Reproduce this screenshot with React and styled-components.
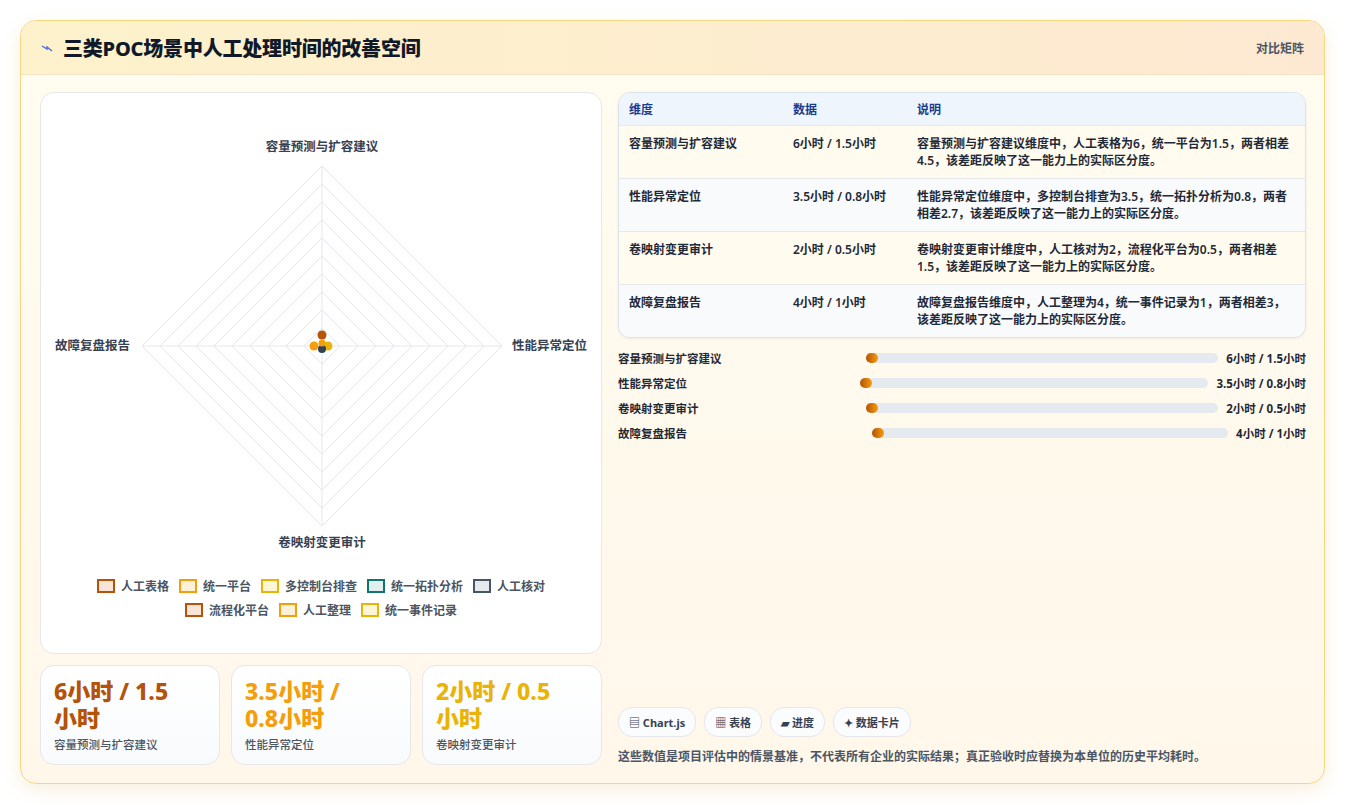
import React from "react";
import styled, { createGlobalStyle } from "styled-components";

const Global = createGlobalStyle`
  html,body{margin:0;padding:0;background:#fff;}
  body{font-family:"Noto Sans","Noto Sans CJK SC",sans-serif;color:#1f2937;}
`;
const Page = styled.div`padding:20px 20px 20px 20px;`;
const Card = styled.div`
  border:1px solid #f5d77e;border-radius:16px;overflow:hidden;
  background:linear-gradient(180deg,#fffcf0,#fff7ea);
  box-shadow:0 6px 18px rgba(217,170,80,.18);height:764px;box-sizing:border-box;display:flex;flex-direction:column;
`;
const Header = styled.div`
  height:54px;display:flex;align-items:center;justify-content:space-between;padding:0 20px 0 20px;
  background:linear-gradient(90deg,#fdf2cc,#fde9d2);border-bottom:1px solid #f1e3c4;
`;
const Title = styled.div`display:flex;align-items:center;gap:10px;font-size:20px;font-weight:800;color:#111827;letter-spacing:-.2px;`;
const Tag = styled.div`font-size:12px;color:#4b5563;font-weight:600;`;
const Body = styled.div`flex:1;display:grid;grid-template-columns:562px 688px;gap:16px;padding:17px 19px 18px 19px;`;
const Col = styled.div`display:flex;flex-direction:column;gap:11px;`;
const ChartBox = styled.div`background:#fff;border:1px solid #e5e7eb;border-radius:14px;height:562px;box-sizing:border-box;display:flex;flex-direction:column;align-items:center;padding-top:8px;`;
const Legend = styled.div`display:flex;flex-wrap:wrap;justify-content:center;gap:6px 10px;width:480px;font-size:12px;font-weight:600;color:#4b5563;margin-top:16px;`;
const LItem = styled.span`display:flex;align-items:center;gap:6px;`;
const Sw = styled.span`width:14px;height:10px;border:2px solid ${p=>p.c};background:${p=>p.bg};`;
const Kpis = styled.div`display:grid;grid-template-columns:repeat(3,1fr);gap:11px;`;
const Kpi = styled.div`background:linear-gradient(180deg,#fff,#f8fafc);border:1px solid #e5e7eb;border-radius:14px;height:100px;box-sizing:border-box;padding:12px 13px;`;
const KVal = styled.div`font-size:23px;font-weight:800;line-height:27px;color:${p=>p.c};`;
const KLab = styled.div`font-size:11.5px;font-weight:500;color:#4b5563;margin-top:4px;`;
const Table = styled.div`border:1px solid #dbe3ec;border-radius:12px;overflow:hidden;background:#fff;box-shadow:0 1px 3px rgba(0,0,0,.06);`;
const Row = styled.div`display:grid;grid-template-columns:164px 124px 1fr;padding:0 10px;border-top:${p=>p.h?"none":"1px solid #e5e7eb"};
  background:${p=>p.h?"#eef5fd":p.alt?"#f8fafc":"#fffbee"};
  font-size:12px;line-height:17px;color:${p=>p.h?"#1e3a8a":"#1f2937"};font-weight:600;
  padding-top:${p=>p.h?"8px":"9px"};padding-bottom:${p=>p.h?"7px":"9px"};min-height:${p=>p.h?"32px":"53px"};box-sizing:border-box;`;
const Bars = styled.div`display:flex;flex-direction:column;gap:7px;margin-top:1px;`;
const BarRow = styled.div`display:flex;align-items:center;font-size:11.5px;font-weight:600;height:18px;`;
const BLab = styled.div`width:${p=>p.w}px;flex-shrink:0;`;
const Track = styled.div`flex:1;height:10px;border-radius:5px;background:#e5e9f0;position:relative;`;
const Fill = styled.div`position:absolute;left:0;top:0;height:10px;width:12px;border-radius:6px;background:linear-gradient(90deg,#b45309,#f59e0b);`;
const BVal = styled.div`font-weight:700;margin-left:8px;white-space:nowrap;`;
const Spacer = styled.div`flex:1;`;
const Chips = styled.div`display:flex;gap:8px;`;
const Chip = styled.div`height:28px;padding:0 10px;border:1px solid #e5e7eb;border-radius:14px;background:#fbfcfe;display:flex;align-items:center;gap:4px;font-size:11px;font-weight:700;color:#374151;`;
const Note = styled.div`font-size:12px;font-weight:600;color:#4b5563;margin-top:10px;`;

const rows=[
["容量预测与扩容建议","6小时 / 1.5小时","容量预测与扩容建议维度中，人工表格为6，统一平台为1.5，两者相差4.5，该差距反映了这一能力上的实际区分度。"],
["性能异常定位","3.5小时 / 0.8小时","性能异常定位维度中，多控制台排查为3.5，统一拓扑分析为0.8，两者相差2.7，该差距反映了这一能力上的实际区分度。"],
["卷映射变更审计","2小时 / 0.5小时","卷映射变更审计维度中，人工核对为2，流程化平台为0.5，两者相差1.5，该差距反映了这一能力上的实际区分度。"],
["故障复盘报告","4小时 / 1小时","故障复盘报告维度中，人工整理为4，统一事件记录为1，两者相差3，该差距反映了这一能力上的实际区分度。"]];
const bars=[[248,"6小时 / 1.5小时"],[242,"3.5小时 / 0.8小时"],[248,"2小时 / 0.5小时"],[254,"4小时 / 1小时"]];
const legend=[["人工表格","#b45309","#f8e5d8"],["统一平台","#f59e0b","#fdf0d8"],["多控制台排查","#eab308","#fdf5d5"],["统一拓扑分析","#0f766e","#e0efee"],["人工核对","#475569","#e5e9ee"],["流程化平台","#b45309","#f8e5d8"],["人工整理","#f59e0b","#fdf0d8"],["统一事件记录","#eab308","#fdf5d5"]];

function Radar(){
  const cx=281,cy=245,R=180;
  const rings=[];
  for(let i=1;i<=10;i++){const r=R*i/10;rings.push(<polygon key={i} points={`${cx},${cy-r} ${cx+r},${cy} ${cx},${cy+r} ${cx-r},${cy}`} fill="none" stroke="#e5e7eb" strokeWidth="1"/>);}
  return(
    <svg width="560" height="460" viewBox="0 0 560 460" style={{display:"block"}}>
      {rings}
      <line x1={cx} y1={cy-R} x2={cx} y2={cy+R} stroke="#e5e7eb"/>
      <line x1={cx-R} y1={cy} x2={cx+R} y2={cy} stroke="#e5e7eb"/>
      <g fontSize="12.5" fill="#374151" fontWeight="600" fontFamily="Noto Sans CJK SC,sans-serif">
        <text x={cx} y={cy-195} textAnchor="middle">容量预测与扩容建议</text>
        <text x={cx} y={cy+201} textAnchor="middle">卷映射变更审计</text>
        <text x={cx-192} y={cy+4} textAnchor="end">故障复盘报告</text>
        <text x={cx+190} y={cy+4} textAnchor="start">性能异常定位</text>
      </g>
      <circle cx={cx} cy={cy-11} r="4.5" fill="#b45309"/>
      <circle cx={cx-8} cy={cy} r="4.5" fill="#f59e0b"/>
      <circle cx={cx+6} cy={cy} r="4.5" fill="#eab308"/>
      <circle cx={cx} cy={cy+3} r="4" fill="#334155"/>
      <circle cx={cx} cy={cy-3} r="3.5" fill="#f59e0b"/>
    </svg>
  );
}

export default function App(){
  return(<><Global/><Page><Card>
    <Header>
      <Title><svg width="12" height="10" viewBox="0 0 12 10"><path d="M1 3 L6 6 L6 4 L11 8" stroke="#4f6bd8" strokeWidth="1.4" fill="none"/></svg>三类POC场景中人工处理时间的改善空间</Title>
      <Tag>对比矩阵</Tag>
    </Header>
    <Body>
      <Col>
        <ChartBox>
          <Radar/>
          <Legend>{legend.map(l=><LItem key={l[0]}><Sw c={l[1]} bg={l[2]}/>{l[0]}</LItem>)}</Legend>
        </ChartBox>
        <Kpis>
          <Kpi><KVal c="#b45309">6小时 / 1.5<br/>小时</KVal><KLab>容量预测与扩容建议</KLab></Kpi>
          <Kpi><KVal c="#f59e0b">3.5小时 /<br/>0.8小时</KVal><KLab>性能异常定位</KLab></Kpi>
          <Kpi><KVal c="#eab308">2小时 / 0.5<br/>小时</KVal><KLab>卷映射变更审计</KLab></Kpi>
        </Kpis>
      </Col>
      <Col style={{gap:0}}>
        <Table>
          <Row h><div>维度</div><div>数据</div><div>说明</div></Row>
          {rows.map((r,i)=><Row key={i} alt={i%2===1}><div>{r[0]}</div><div>{r[1]}</div><div>{r[2]}</div></Row>)}
        </Table>
        <div style={{height:10}}/>
        <Bars>{rows.map((r,i)=><BarRow key={i}><BLab w={bars[i][0]}>{r[0]}</BLab><Track><Fill/></Track><BVal>{bars[i][1]}</BVal></BarRow>)}</Bars>
        <Spacer/>
        <Chips>
          <Chip>▤ Chart.js</Chip><Chip>▦ 表格</Chip><Chip>▰ 进度</Chip><Chip>✦ 数据卡片</Chip>
        </Chips>
        <Note>这些数值是项目评估中的情景基准，不代表所有企业的实际结果；真正验收时应替换为本单位的历史平均耗时。</Note>
      </Col>
    </Body>
  </Card></Page></>);
}
